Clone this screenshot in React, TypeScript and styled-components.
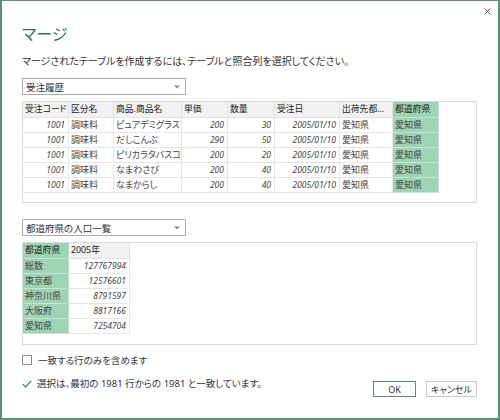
import React from "react";
import styled, { createGlobalStyle } from "styled-components";

const Global = createGlobalStyle`
  html, body { margin: 0; padding: 0; background: #ffffff; }
  body {
    font-family: "Noto Sans", "Noto Sans CJK JP", sans-serif;
    font-feature-settings: "palt";
    color: #333333;
  }
  * { box-sizing: border-box; }
`;

const Window = styled.div`
  width: 500px;
  height: 420px;
  border: 2px solid #5e8f7a;
  border-top-width: 1px;
  background: #ffffff;
  display: flex;
  flex-direction: column;
  padding: 0 21px 0 20px;
`;

const TopBar = styled.div`
  height: 19px;
  display: flex;
  justify-content: flex-end;
  align-items: flex-end;
  margin-right: -16px;
`;

const CloseButton = styled.button`
  width: 12px;
  height: 12px;
  padding: 0;
  border: none;
  background: transparent;
  display: flex;
  align-items: center;
  justify-content: center;
  margin-bottom: 3px;
`;

const Title = styled.h1`
  margin: 4px 0 0 0;
  height: 20px;
  font-size: 16px;
  line-height: 20px;
  font-weight: 400;
  color: #2f7658;
`;

const Subtitle = styled.p`
  margin: 10px 0 0 0;
  height: 14px;
  font-size: 10px;
  line-height: 14px;
  color: #333333;
`;

const Dropdown = styled.div<{ $top: number }>`
  margin-top: ${(p) => p.$top}px;
  width: 164px;
  height: 17px;
  flex: none;
  border: 1px solid #adadad;
  display: flex;
  align-items: center;
  justify-content: space-between;
  padding: 0 5px 0 3px;
  font-size: 9.5px;
  color: #333333;
`;

const TableBox = styled.div<{ $height: number }>`
  margin-top: 6px;
  height: ${(p) => p.$height}px;
  flex: none;
  border: 1px solid #dadada;
  display: flex;
  align-items: flex-start;
`;

const Grid = styled.div<{ $cols: string }>`
  display: grid;
  grid-template-columns: ${(p) => p.$cols};
  grid-auto-rows: 15px;
  grid-template-rows: 16px;
`;

const HeadCell = styled.div<{ $sel?: boolean }>`
  background: ${(p) => (p.$sel ? "#9ed3b4" : "#f2f2f2")};
  border-right: 1px solid ${(p) => (p.$sel ? "#b9e0c9" : "#e2e2e2")};
  border-bottom: 1px solid ${(p) => (p.$sel ? "#c4e6d2" : "#e2e2e2")};
  padding: 0 1px 0 2px;
  font-size: 8.8px;
  line-height: 15px;
  font-weight: 400;
  color: #1a1a1a;
  white-space: nowrap;
  overflow: hidden;
  text-overflow: ellipsis;
`;

const Cell = styled.div<{ $sel?: boolean; $num?: boolean }>`
  background: ${(p) => (p.$sel ? "#9ed3b4" : "#ffffff")};
  border-right: 1px solid ${(p) => (p.$sel ? "#b9e0c9" : "#e6e6e6")};
  border-bottom: 1px solid ${(p) => (p.$sel ? "#c4e6d2" : "#e6e6e6")};
  padding: ${(p) => (p.$num ? "0 3px 0 2px" : "0 2px 0 2px")};
  font-size: ${(p) => (p.$num ? "8.5px" : "9px")};
  font-style: ${(p) => (p.$num ? "italic" : "normal")};
  text-align: ${(p) => (p.$num ? "right" : "left")};
  line-height: 14px;
  color: #444444;
  white-space: nowrap;
  overflow: hidden;
`;

const OptionRow = styled.label`
  margin-top: 8px;
  height: 14px;
  display: flex;
  align-items: center;
  gap: 6px;
  font-size: 9.5px;
  color: #333333;
`;

const Box = styled.span`
  width: 10px;
  height: 10px;
  border: 1px solid #8e8e8e;
  background: #ffffff;
  flex: none;
`;

const Footer = styled.div`
  margin-top: 14px;
  display: flex;
  align-items: flex-start;
  justify-content: space-between;
`;

const Status = styled.div`
  margin-top: -4px;
  height: 14px;
  display: flex;
  align-items: center;
  gap: 5px;
  font-size: 9.5px;
  line-height: 14px;
  color: #333333;
`;

const Buttons = styled.div`
  display: flex;
  gap: 10px;
`;

const Button = styled.button<{ $primary?: boolean; $w: number }>`
  width: ${(p) => p.$w}px;
  height: 16px;
  padding: 0;
  background: #ffffff;
  border: 1px solid ${(p) => (p.$primary ? "#5a8c75" : "#c9c9c9")};
  font-family: "Noto Sans", "Noto Sans CJK JP", sans-serif;
  font-feature-settings: "palt";
  font-size: 9px;
  color: #333333;
  display: flex;
  align-items: center;
  justify-content: center;
`;

const Arrow = () => (
  <svg width="6" height="4" viewBox="0 0 6 4">
    <polygon points="0,0.5 6,0.5 3,3.5" fill="#8a8a8a" />
  </svg>
);

const cols1 = "46px 45px 68px 46px 47px 65px 53px 46px";
const headers1 = ["受注コード", "区分名", "商品.商品名", "単価", "数量", "受注日", "出荷先都道府県", "都道府県"];
const rows1 = [
  ["1001", "調味料", "ピュアデミグラスソース", "200", "30", "2005/01/10", "愛知県", "愛知県"],
  ["1001", "調味料", "だしこんぶ", "290", "50", "2005/01/10", "愛知県", "愛知県"],
  ["1001", "調味料", "ピリカラタバスコ", "200", "20", "2005/01/10", "愛知県", "愛知県"],
  ["1001", "調味料", "なまわさび", "200", "40", "2005/01/10", "愛知県", "愛知県"],
  ["1001", "調味料", "なまからし", "200", "40", "2005/01/10", "愛知県", "愛知県"],
];
const numCols1 = [0, 3, 4, 5];

const rows2 = [
  ["総数", "127767994"],
  ["東京都", "12576601"],
  ["神奈川県", "8791597"],
  ["大阪府", "8817166"],
  ["愛知県", "7254704"],
];

export default function App() {
  return (
    <>
      <Global />
      <Window>
        <TopBar>
          <CloseButton aria-label="close">
            <svg width="7" height="7" viewBox="0 0 7 7">
              <path d="M0.5 0.5 L6.5 6.5 M6.5 0.5 L0.5 6.5" stroke="#555" strokeWidth="1" />
            </svg>
          </CloseButton>
        </TopBar>
        <Title>マージ</Title>
        <Subtitle>マージされたテーブルを作成するには、テーブルと照合列を選択してください。</Subtitle>

        <Dropdown $top={10}>
          <span>受注履歴</span>
          <Arrow />
        </Dropdown>
        <TableBox $height={102}>
          <Grid $cols={cols1}>
            {headers1.map((h, i) => (
              <HeadCell key={h} $sel={i === 7}>
                {h}
              </HeadCell>
            ))}
            {rows1.map((r, ri) =>
              r.map((v, ci) => (
                <Cell key={`${ri}-${ci}`} $sel={ci === 7} $num={numCols1.includes(ci)}>
                  {v}
                </Cell>
              ))
            )}
          </Grid>
        </TableBox>

        <Dropdown $top={16}>
          <span>都道府県の人口一覧</span>
          <Arrow />
        </Dropdown>
        <TableBox $height={103}>
          <Grid $cols="46px 61px">
            <HeadCell $sel>都道府県</HeadCell>
            <HeadCell>2005年</HeadCell>
            {rows2.map((r) => (
              <React.Fragment key={r[0]}>
                <Cell $sel>{r[0]}</Cell>
                <Cell $num>{r[1]}</Cell>
              </React.Fragment>
            ))}
          </Grid>
        </TableBox>

        <OptionRow>
          <Box />
          <span>一致する行のみを含めます</span>
        </OptionRow>

        <Footer>
          <Status>
            <svg width="10" height="8" viewBox="0 0 10 8">
              <path d="M0.8 4 L3.6 7 L9.4 0.6" fill="none" stroke="#3f8d6a" strokeWidth="1.3" />
            </svg>
            <span>選択は、最初の 1981 行からの 1981 と一致しています。</span>
          </Status>
          <Buttons>
            <Button $primary $w={43}>OK</Button>
            <Button $w={51}>キャンセル</Button>
          </Buttons>
        </Footer>
      </Window>
    </>
  );
}
